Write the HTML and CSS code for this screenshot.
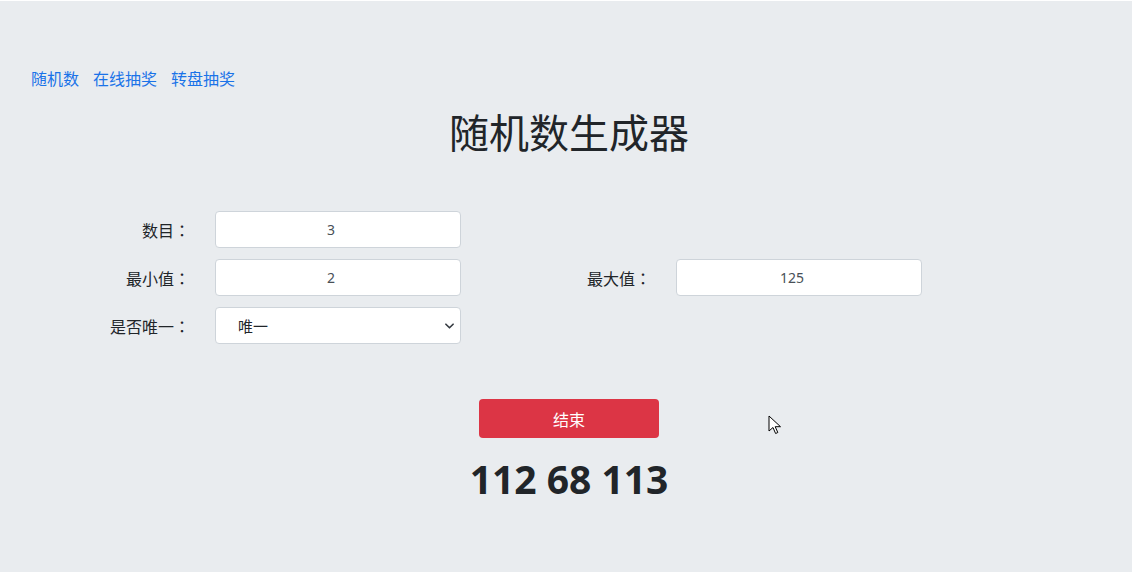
FILE: index.html
```html
<!DOCTYPE html>
<html lang="zh-CN">
<head>
<meta charset="utf-8">
<title>随机数生成器</title>
<link rel="stylesheet" href="styles.css">
</head>
<body>
<div class="page">
  <nav class="nav">
    <a href="#">随机数</a>
    <a href="#">在线抽奖</a>
    <a href="#">转盘抽奖</a>
  </nav>
  <h1 class="title">随机数生成器</h1>
  <form class="form">
    <label class="label">数目<span class="colon">：</span></label>
    <div class="field"><input class="input" type="text" value="3"></div>
    <div class="empty"></div>
    <div class="empty"></div>

    <label class="label">最小值<span class="colon">：</span></label>
    <div class="field"><input class="input" type="text" value="2"></div>
    <label class="label">最大值<span class="colon">：</span></label>
    <div class="field"><input class="input" type="text" value="125"></div>

    <label class="label">是否唯一<span class="colon">：</span></label>
    <div class="field">
      <div class="select">
        <span>唯一</span>
        <svg class="chev" viewBox="0 0 10 6" width="9" height="6"><path d="M1 1l4 4 4-4" fill="none" stroke="#343a40" stroke-width="1.8" stroke-linecap="round" stroke-linejoin="round"/></svg>
      </div>
    </div>
  </form>
  <div class="actions">
    <button class="btn" type="button">结束</button>
  </div>
  <div class="result">112 68 113</div>
  <svg class="cursor" viewBox="0 0 14 20" width="14" height="20"><path d="M1 1v15l4-3.5 2.6 6 2.2-1-2.6-5.8H12.5z" fill="#fff" stroke="#000" stroke-width="1" stroke-linejoin="round"/></svg>
</div>
</body>
</html>
```
FILE: styles.css
```css
html, body {
  margin: 0;
  padding: 0;
  background: #ffffff;
}
body {
  font-family: "Noto Sans", "Noto Sans CJK SC", sans-serif;
  color: #212529;
}
.page {
  position: relative;
  box-sizing: border-box;
  margin: 1px 2px 0 0;
  height: 571px;
  background: #e9ecef;
  padding: 65px 10px 0 16px;
}
.nav {
  display: flex;
  gap: 14px;
  padding-left: 15px;
  font-size: 16px;
  line-height: 24px;
}
.nav a {
  color: #1a73e8;
  text-decoration: none;
  font-family: "Noto Sans CJK SC", sans-serif;
}
.title {
  margin: 17px 0 0 0;
  text-align: center;
  font-family: "Noto Sans CJK SC", sans-serif;
  font-weight: 400;
  font-size: 40px;
  line-height: 48px;
  color: #212529;
}
.form {
  margin-top: 56px;
  display: grid;
  grid-template-columns: 184px 276px 185px 276px;
  grid-auto-rows: 37px;
  row-gap: 11px;
}
.label {
  display: flex;
  align-items: center;
  justify-content: flex-end;
  padding-right: 10px;
  font-family: "Noto Sans CJK SC", sans-serif;
  font-size: 16px;
  color: #212529;
}
.colon {
  font-family: "Noto Sans CJK JP", sans-serif;
}
.field {
  padding: 0 15px;
}
.input, .select {
  box-sizing: border-box;
  width: 246px;
  height: 37px;
  border: 1px solid #ced4da;
  border-radius: 4px;
  background: #fff;
  font-family: "Noto Sans", sans-serif;
  font-size: 14px;
  color: #495057;
  text-align: center;
  outline: none;
  padding: 0 26px 0 12px;
}
.select {
  display: flex;
  align-items: center;
  justify-content: space-between;
  padding: 0 6px 0 22px;
  font-family: "Noto Sans CJK SC", sans-serif;
  font-size: 15px;
  color: #212529;
}
.chev {
  display: block;
}
.actions {
  margin-top: 55px;
  display: flex;
  justify-content: center;
}
.btn {
  width: 180px;
  height: 39px;
  border: none;
  border-radius: 4px;
  background: #dc3545;
  color: #fff;
  font-family: "Noto Sans CJK SC", sans-serif;
  font-size: 16px;
  cursor: pointer;
}
.result {
  margin-top: 17px;
  text-align: center;
  font-family: "Open Sans", "Noto Sans", sans-serif;
  font-weight: 700;
  font-size: 39px;
  line-height: 48px;
  color: #212529;
}
.cursor {
  position: absolute;
  left: 768px;
  top: 414px;
}
```
